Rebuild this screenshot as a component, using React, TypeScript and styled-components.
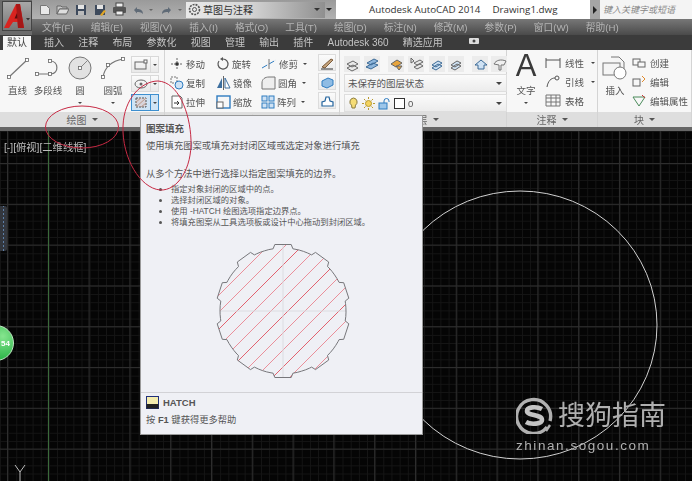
import React from 'react';
import styled, { createGlobalStyle } from 'styled-components';

const GlobalStyle = createGlobalStyle`
  html, body { margin: 0; padding: 0; background: #050505; }
  body { font-family: "Liberation Sans", "Noto Sans CJK SC", sans-serif; }
  #root { width: 692px; height: 481px; overflow: hidden; }
`;

const MENU_ITEMS = ['文件(F)', '编辑(E)', '视图(V)', '插入(I)', '格式(O)', '工具(T)', '绘图(D)', '标注(N)', '修改(M)', '参数(P)', '窗口(W)', '帮助(H)'];
const TAB_ITEMS = ['插入', '注释', '布局', '参数化', '视图', '管理', '输出', '插件', 'Autodesk 360', '精选应用'];
const BULLETS = ['指定对象封闭的区域中的点。', '选择封闭区域的对象。', '使用 -HATCH 绘图选项指定边界点。', '将填充图案从工具选项板或设计中心拖动到封闭区域。'];

const RED = '#c62a44';

/* outline of the notched disc in the tooltip, ten tabs round a circle */
const hatchOutline = (cx: number, cy: number) => {
  const pts: string[] = [];
  for (let i = 0; i < 10; i++) {
    const a = ((90 + i * 36) * Math.PI) / 180;
    const at = (deg: number, r: number) => {
      const t = a + (deg * Math.PI) / 180;
      return `${(cx + r * Math.cos(t)).toFixed(1)} ${(cy - r * Math.sin(t)).toFixed(1)}`;
    };
    pts.push(at(-9, 63), at(-7, 67), at(7, 67), at(9, 63));
    for (let d = 13; d <= 25; d += 4) pts.push(at(d, 63));
  }
  return `M${pts.join('L')}Z`;
};

const Page = styled.div`
  width: 692px;
  height: 481px;
  position: relative;
  overflow: hidden;
  display: flex;
  flex-direction: column;
  filter: blur(0.35px);
`;

const Header = styled.div`
  display: flex;
  height: 35px;
`;

const LogoCell = styled.div`
  width: 32px;
  flex: none;
  background: #6b6b6b;
  padding: 1px 0 4px 2px;
  box-sizing: border-box;
`;

const LogoBox = styled.div`
  width: 30px;
  height: 30px;
  background: linear-gradient(#a8a8a8, #777);
  border: 1px solid #444;
  box-sizing: border-box;
  display: flex;
  align-items: center;
  justify-content: center;
`;

const HeaderRows = styled.div`
  flex: 1;
  display: flex;
  flex-direction: column;
  min-width: 0;
`;

const TopRow = styled.div`
  height: 19px;
  display: flex;
  background: #fff;
`;

const QuickBar = styled.div`
  width: 304px;
  flex: none;
  display: flex;
  align-items: center;
  padding-left: 7px;
  box-sizing: border-box;
  background: linear-gradient(#9a9a9a, #b2b2b2);
`;

const QuickIcon = styled.div<{ $gap: number }>`
  display: flex;
  margin-right: ${p => p.$gap}px;
`;

const Workspace = styled.div`
  width: 139px;
  height: 16px;
  margin-left: 4px;
  display: flex;
  align-items: center;
  gap: 2px;
  padding-left: 2px;
  box-sizing: border-box;
  font-size: 10px;
  color: #333;
  background: linear-gradient(90deg, #e9e9e9, #d6d6d6 45%, #8f8f8f);
`;

const TitleText = styled.div`
  width: 254px;
  flex: none;
  padding-left: 33px;
  box-sizing: border-box;
  display: flex;
  gap: 12px;
  align-items: center;
  font-size: 9.8px;
  font-family: "Open Sans", "Liberation Sans", sans-serif;
  color: #333;
  white-space: nowrap;
`;

const SearchArrow = styled.div`
  width: 10px;
  flex: none;
  background: #a5a5a5;
  display: flex;
  align-items: center;
  justify-content: center;
`;

const SearchBox = styled.div`
  flex: 1;
  font-size: 9px;
  font-style: italic;
  color: #888;
  padding-left: 3px;
  display: flex;
  align-items: center;
  white-space: nowrap;
  overflow: hidden;
  background: #f4f4f4;
`;

const MenuBar = styled.div`
  height: 16px;
  display: flex;
  align-items: center;
  gap: 17px;
  padding-left: 10px;
  font-size: 9.7px;
  color: #b4b4b4;
  white-space: nowrap;
  background: linear-gradient(#777, #4a4a4a);
`;

const TabBar = styled.div`
  height: 15px;
  display: flex;
  align-items: flex-end;
  background: #3b3b3b;
  padding-left: 3px;
  font-size: 10px;
  white-space: nowrap;
  color: #c4c4c4;
`;

const ActiveTab = styled.div`
  width: 28px;
  height: 14px;
  background: #f6f6f6;
  color: #444;
  text-align: center;
  line-height: 14px;
  margin-right: 13px;
`;

const Tab = styled.div<{ $ml?: number }>`
  height: 14px;
  line-height: 14px;
  margin-right: 14.2px;
  margin-left: ${p => p.$ml ?? 0}px;
`;

const Ribbon = styled.div`
  display: flex;
  height: 77px;
  background: #f7f7f7;
  color: #555;
  font-size: 9.5px;
  border-bottom: 4px solid #666;
`;

const Panel = styled.div<{ $w: number }>`
  width: ${p => p.$w}px;
  flex: none;
  display: flex;
  flex-direction: column;
  border-right: 1px solid #d4d4d4;
  box-sizing: border-box;
`;

const PanelBody = styled.div<{ $pad?: string; $gap?: number }>`
  height: 62px;
  display: flex;
  padding: ${p => p.$pad ?? '0'};
  gap: ${p => p.$gap ?? 0}px;
  box-sizing: border-box;
`;

const PanelTitle = styled.div`
  flex: 1;
  display: flex;
  align-items: center;
  justify-content: center;
  gap: 5px;
  background: #dedede;
  color: #666;
  font-size: 10px;
`;

const Caret = styled.span<{ $c?: string; $s?: number }>`
  display: inline-block;
  width: 0;
  height: 0;
  flex: none;
  border-left: ${p => p.$s ?? 3}px solid transparent;
  border-right: ${p => p.$s ?? 3}px solid transparent;
  border-top: ${p => p.$s ?? 3}px solid ${p => p.$c ?? '#444'};
`;

const LargeTool = styled.div<{ $w: number }>`
  width: ${p => p.$w}px;
  flex: none;
  display: flex;
  flex-direction: column;
  align-items: center;
  padding-top: 6px;
  line-height: 12px;
  font-size: 9.5px;
  gap: 5px;
  white-space: nowrap;
`;

const SideColumn = styled.div`
  display: flex;
  flex-direction: column;
  gap: 2px;
  padding-top: 6px;
`;

const SplitButton = styled.div<{ $on?: boolean }>`
  width: 28px;
  height: 17px;
  display: flex;
  box-sizing: border-box;
  background: ${p => (p.$on ? '#cfe4f5' : 'linear-gradient(#fbfbfb, #e9e9e9)')};
  border: 1px solid ${p => (p.$on ? '#3d8fcf' : '#d9d9d9')};
`;

const SplitMain = styled.div<{ $on?: boolean }>`
  width: 18px;
  display: flex;
  align-items: center;
  justify-content: center;
  border-right: 1px solid ${p => (p.$on ? '#3d8fcf' : '#d9d9d9')};
`;

const SplitArrow = styled.div`
  flex: 1;
  display: flex;
  align-items: center;
  justify-content: center;
`;

const ModifyGrid = styled.div`
  display: grid;
  grid-template-columns: 46px 45px 55px;
  grid-auto-rows: 19px;
  padding: 4px 0 0 5px;
`;

const SmallTool = styled.div`
  display: flex;
  align-items: center;
  gap: 2px;
  white-space: nowrap;
  font-size: 9.5px;
`;

const ToolButtons = styled.div`
  display: flex;
  flex-direction: column;
  gap: 2px;
  padding: 4px 0 0 2px;
`;

const SquareButton = styled.div`
  width: 18px;
  height: 17px;
  display: flex;
  align-items: center;
  justify-content: center;
  background: linear-gradient(#fbfbfb, #ececec);
  border: 1px solid #dcdcdc;
  box-sizing: border-box;
`;

const LayerStack = styled.div`
  flex: 1;
  display: flex;
  flex-direction: column;
  gap: 2px;
  padding: 5px 4px 0 4px;
`;

const LayerIcons = styled.div`
  height: 17px;
  display: flex;
  align-items: center;
`;

const LayerIcon = styled.div<{ $ml: number }>`
  display: flex;
  margin-left: ${p => p.$ml}px;
  background: #ececec;
`;

const LayerCombo = styled.div`
  height: 18px;
  display: flex;
  align-items: center;
  gap: 3px;
  padding: 0 4px 0 3px;
  background: linear-gradient(#fbfbfb, #ececec);
  border: 1px solid #dedede;
  box-sizing: border-box;
  font-size: 9.5px;
  color: #555;
`;

const Spacer = styled.div`
  flex: 1;
`;

const SwatchBox = styled.div`
  width: 9px;
  height: 9px;
  border: 1px solid #333;
  background: #fff;
`;

const TextColumn = styled.div`
  display: flex;
  flex-direction: column;
  padding-top: 3px;
`;

const TextRow = styled.div`
  height: 19px;
  display: flex;
  align-items: center;
  gap: 4px;
  white-space: nowrap;
  font-size: 9.5px;
`;

const BigA = styled.div`
  font-family: "Liberation Sans", sans-serif;
  font-size: 31px;
  line-height: 24px;
  height: 24px;
  margin: -2px 0 2px;
  color: #3a3a3a;
`;

const Canvas = styled.div`
  flex: 1;
  position: relative;
  background-color: #050505;
  background-image:
    linear-gradient(#2e2e2e 1px, transparent 1px),
    linear-gradient(90deg, #2e2e2e 1px, transparent 1px),
    linear-gradient(#151515 1px, transparent 1px),
    linear-gradient(90deg, #151515 1px, transparent 1px);
  background-size: 40.8px 40.8px, 40.8px 40.8px, 8.16px 8.16px, 8.16px 8.16px;
  background-position: 0 32px, 7px 0, 0 0, 0 0;
`;

const CanvasDrawing = styled.svg`
  position: absolute;
  inset: 0;
`;

const ViewLabel = styled.div`
  position: absolute;
  left: 4px;
  top: 8px;
  font-size: 10.3px;
  color: #bdbdbd;
  white-space: nowrap;
`;

const SideHandle = styled.div`
  position: absolute;
  left: 0;
  top: 75px;
  width: 7px;
  height: 45px;
  background: radial-gradient(circle, #5d7ea6 0.7px, transparent 1px) 0 22px / 7px 4px repeat-y, #33373e;
  border-radius: 0 2px 2px 0;
`;

const Badge = styled.div`
  position: absolute;
  left: -22px;
  top: 194px;
  width: 36px;
  height: 36px;
  border-radius: 50%;
  box-sizing: border-box;
  border: 1px solid #bfe8c3;
  background: radial-gradient(circle at 70% 30%, #86e58f, #2cb548 70%);
  color: #fff;
  font-size: 8px;
  font-weight: bold;
  display: flex;
  align-items: center;
  justify-content: flex-end;
  padding-right: 3px;
`;

const Watermark = styled.div`
  position: absolute;
  left: 516px;
  top: 266px;
  width: 152px;
  color: #b0b0b0;
`;

const WatermarkTop = styled.div`
  display: flex;
  align-items: center;
  gap: 5px;
`;

const WatermarkName = styled.div`
  font-size: 27px;
  line-height: 36px;
  white-space: nowrap;
`;

const WatermarkUrl = styled.div`
  font-size: 13.5px;
  letter-spacing: 1.55px;
  line-height: 16px;
  margin-top: 4px;
  white-space: nowrap;
`;

const Tooltip = styled.div`
  position: absolute;
  left: 140px;
  top: 115px;
  width: 283px;
  height: 320px;
  box-sizing: border-box;
  background: #eff0f5;
  border: 1px solid #9a9a9a;
  color: #555;
  display: flex;
  flex-direction: column;
  padding: 6px 0 0 5px;
`;

const TipTitle = styled.div`
  font-size: 9.5px;
  font-weight: bold;
  line-height: 13px;
  color: #555;
`;

const TipLine = styled.div<{ $mt: number }>`
  font-size: 9.3px;
  line-height: 13px;
  margin-top: ${p => p.$mt}px;
  white-space: nowrap;
`;

const BulletList = styled.ul`
  list-style: disc;
  margin: 3px 0 0;
  padding: 0 0 0 25px;
  font-size: 8.3px;
  line-height: 11px;
  white-space: nowrap;
`;

const HatchFigure = styled.svg`
  display: block;
  margin: 15px 0 0 69px;
`;

const TipFooter = styled.div`
  margin: 11px 0 0 -5px;
  border-top: 1px solid #d2d2d6;
  padding: 3px 0 0 5px;
  display: flex;
  flex-direction: column;
  gap: 5px;
`;

const CommandRow = styled.div`
  display: flex;
  align-items: center;
  gap: 4px;
  font-size: 9.5px;
  font-weight: bold;
  line-height: 13px;
`;

const HelpLine = styled.div`
  font-size: 9.3px;
  line-height: 13px;
  b { font-weight: bold; }
`;

const Annotations = styled.svg`
  position: absolute;
  inset: 0;
  pointer-events: none;
`;

/* small drawings */
const Ico: React.FC<{ s?: number; h?: number; children: React.ReactNode }> = ({ s = 14, h, children }) => (
  <svg width={s} height={h ?? s} viewBox={`0 0 ${s} ${h ?? s}`} fill="none" style={{ flex: 'none' }}>
    {children}
  </svg>
);

const Node: React.FC<{ x: number; y: number }> = ({ x, y }) => (
  <rect x={x - 1.5} y={y - 1.5} width={3} height={3} fill="#fff" stroke="#666" strokeWidth={0.8} />
);

const AutocadLogo = () => (
  <svg width="28" height="28" viewBox="0 0 28 28">
    <path d="M1 26 L13 2 L17 2 L21 26 L15 26 L14.6 20 L10 20 L6 26 Z" fill="#d9231f" />
    <path d="M13 2 L17 2 L21 26 L15 26 Z" fill="#a51717" />
    <path d="M11.5 16.5 L14 11 L14.4 16.5 Z" fill="#5c0d0d" />
    <path d="M23 16 h4 l-2 2.5 z" fill="#333" />
  </svg>
);

const QUICK: { gap: number; node: React.ReactNode }[] = [
  { gap: 5, node: <Ico s={12}><path d="M1.5 1.5h6l3 3v6h-9z" fill="#e9e9e9" stroke="#777" /></Ico> },
  { gap: 6, node: <Ico s={13}><path d="M1 3h4l1 1h5v2H3.5L1 11z" fill="#c8c8c8" stroke="#666" /><path d="M1 11l2.5-5H13l-2.5 5z" fill="#dedede" stroke="#666" /></Ico> },
  { gap: 7, node: <Ico s={12}><rect x="1" y="1" width="10" height="10" fill="#3e4a5c" /><rect x="3" y="1" width="6" height="4" fill="#e4e4e4" /><rect x="3" y="7" width="6" height="4" fill="#bbb" /></Ico> },
  { gap: 6, node: <Ico s={12}><rect x="1" y="1" width="10" height="10" fill="#3e4a5c" /><rect x="3" y="1" width="6" height="4" fill="#e4e4e4" /><path d="M6 11l4-5 2 1-4 5z" fill="#e0a526" /></Ico> },
  { gap: 5, node: <Ico s={15}><rect x="4" y="1" width="7" height="4" fill="#eee" stroke="#444" /><rect x="1" y="5" width="13" height="6" rx="1" fill="#555" /><rect x="4" y="9" width="7" height="4" fill="#eee" stroke="#444" /></Ico> },
  { gap: 5, node: <Ico s={12}><path d="M2 6 L5 3 V5 C8 5 11 6 11 10 C9 8 7 8 5 8 V9.5 Z" fill="#5f6a76" /></Ico> },
  { gap: 8, node: <Caret $s={2} $c="#666" /> },
  { gap: 5, node: <Ico s={12}><path d="M10 6 L7 3 V5 C4 5 1 6 1 10 C3 8 5 8 7 8 V9.5 Z" fill="#5f6a76" /></Ico> },
  { gap: 0, node: <Caret $s={2} $c="#666" /> },
];

const LineIcon = () => (
  <Ico s={24}><path d="M3 21 L21 4" stroke="#777" strokeWidth={1.2} /><Node x={3} y={21} /><Node x={21} y={4} /></Ico>
);
const PolylineIcon = () => (
  <Ico s={26} h={24}><path d="M2 18 H16 C24 18 24 5 15 5" stroke="#777" strokeWidth={1.2} /><Node x={2} y={18} /><Node x={15} y={18} /><Node x={15} y={5} /></Ico>
);
const CircleIcon = () => (
  <Ico s={24}><circle cx={12} cy={12} r={11} fill="#e2e2e2" stroke="#777" /><path d="M12 12 L20 4" stroke="#888" /><Node x={12} y={12} /></Ico>
);
const ArcIcon = () => (
  <Ico s={26} h={24}><path d="M3 21 C5 10 12 5 23 3" stroke="#777" strokeWidth={1.2} /><Node x={3} y={21} /><Node x={8} y={9} /><Node x={23} y={3} /></Ico>
);

const SMALL: Record<string, React.ReactNode> = {
  移动: <Ico s={14}><path d="M7 1v12M1 7h12" stroke="#666" strokeDasharray="2 1" /><rect x="5.5" y="5.5" width="3" height="3" fill="#333" /></Ico>,
  旋转: <Ico s={14}><path d="M7 2a5 5 0 1 1-4 2" stroke="#555" strokeWidth={1.2} /><path d="M7 0v4L4 2z" fill="#555" /></Ico>,
  修剪: <Ico s={16} h={14}><path d="M1 11L15 3" stroke="#2f7cc0" strokeDasharray="6 2" /><path d="M8 2v10" stroke="#777" /></Ico>,
  复制: <Ico s={14}><rect x="1" y="1" width="6" height="6" fill="none" stroke="#777" strokeDasharray="2 1" /><circle cx="9" cy="9" r="4" fill="#cfe2f4" stroke="#2f7cc0" /></Ico>,
  镜像: <Ico s={15} h={14}><path d="M1 12L6 2v10z" fill="#3d6f9f" /><path d="M14 12L9 2v10z" fill="#fff" stroke="#3d6f9f" /><path d="M7.5 0v14" stroke="#666" /></Ico>,
  圆角: <Ico s={15} h={14}><path d="M1 13V7C1 3 4 1 8 1h6v12z" fill="#eee" stroke="#777" /></Ico>,
  拉伸: <Ico s={14}><path d="M2 1h8l2 2v10H2z" fill="#fff" stroke="#666" /><path d="M4 8h5M7 6l2 2-2 2" stroke="#333" /></Ico>,
  缩放: <Ico s={15} h={14}><rect x="1" y="1" width="13" height="12" fill="none" stroke="#2f7cc0" strokeWidth={1.4} /><rect x="1" y="7" width="6" height="6" fill="#fff" stroke="#666" /></Ico>,
  阵列: <Ico s={14}><g fill="#cfe2f4" stroke="#2f7cc0"><rect x="1" y="1" width="5" height="5" /><rect x="8" y="1" width="5" height="5" /><rect x="1" y="8" width="5" height="5" /><rect x="8" y="8" width="5" height="5" /></g></Ico>,
};

const LAYER_ICONS: { ml: number; node: React.ReactNode }[] = [
  { ml: 0, node: <path d="M3 12l6-3 5 3-6 3zM3 8l6-3 5 3-6 3z" fill="#e8e8e8" stroke="#666" /> },
  { ml: 4, node: <path d="M2 11l7-4 5 2-7 4zM3 7l7-4 4 2-7 4z" fill="#8eb6dc" stroke="#3c6a96" /> },
  { ml: 8, node: <path d="M3 8l6-4 5 3-6 4z M8 10h6l-3 4z" fill="#e7a43c" stroke="#666" /> },
  { ml: 4, node: <path d="M6 7l6-3 3 2-6 3zM6 11l6-3 3 2-6 3zM3 2v5l3-2z" fill="#e8e8e8" stroke="#666" /> },
  { ml: 5, node: <path d="M3 9l6-4 4 2-6 4zM3 12l6-4 4 2-6 4z" fill="#cfe2f4" stroke="#3c6a96" /> },
  { ml: 3, node: <path d="M3 9l6-4 4 2-6 4zM3 12l6-4 4 2-6 4z" fill="#cfe2f4" stroke="#666" /> },
  { ml: 8, node: <path d="M3 9l6-5 6 5h-3v4H6V9z" fill="#cfe2f4" stroke="#3c6a96" /> },
  { ml: 3, node: <path d="M3 8c2-4 7-5 12-3l-2 4h-3v5H8V9z" fill="#f0f0f0" stroke="#777" /> },
];

const GearHatch = () => {
  const d = hatchOutline(68, 68);
  const lines: React.ReactNode[] = [];
  for (let i = 0; i < 15; i++) {
    const sum = 22 + i * 17;
    lines.push(<line key={i} x1={sum} y1={0} x2={0} y2={sum} stroke={i % 3 === 1 ? '#e2626f' : '#ea8f9a'} strokeWidth={1} />);
  }
  return (
    <HatchFigure width="136" height="138" viewBox="0 0 136 138">
      <defs>
        <clipPath id="gear">
          <path d={d} />
        </clipPath>
      </defs>
      <g clipPath="url(#gear)">
        {lines}
        <path d="M0 68H136M68 0V138" stroke="#dcdce1" strokeWidth={1} />
      </g>
      <path d={d} fill="none" stroke="#77777b" strokeWidth={1} />
    </HatchFigure>
  );
};

const App: React.FC = () => (
  <Page>
    <GlobalStyle />
    <Header>
      <LogoCell>
        <LogoBox>
          <AutocadLogo />
        </LogoBox>
      </LogoCell>
      <HeaderRows>
        <TopRow>
          <QuickBar>
            {QUICK.map((q, i) => (
              <QuickIcon key={i} $gap={q.gap}>{q.node}</QuickIcon>
            ))}
            <Workspace>
              <Ico s={13}><circle cx="6.5" cy="6.5" r="5" stroke="#555" strokeWidth={1.6} strokeDasharray="2 1" /><circle cx="6.5" cy="6.5" r="2" stroke="#555" /></Ico>
              草图与注释
              <Spacer />
              <Caret $s={3} $c="#333" />
              &nbsp;
            </Workspace>
            <Spacer />
            <Caret $s={3} $c="#222" />
            &nbsp;
          </QuickBar>
          <TitleText>
            <span>Autodesk AutoCAD 2014</span>
            <span>Drawing1.dwg</span>
          </TitleText>
          <SearchArrow>
            <Ico s={6} h={8}><path d="M1 0l4 4-4 4z" fill="#222" /></Ico>
          </SearchArrow>
          <SearchBox>键入关键字或短语</SearchBox>
        </TopRow>
        <MenuBar>
          {MENU_ITEMS.map(m => (
            <span key={m}>{m}</span>
          ))}
        </MenuBar>
      </HeaderRows>
    </Header>
    <TabBar>
      <ActiveTab>默认</ActiveTab>
      {TAB_ITEMS.map(t => (
        <Tab key={t}>{t}</Tab>
      ))}
      <Tab $ml={10}>
        <Ico s={16} h={10}><rect x="2" y="2" width="10" height="6" rx="1" fill="#ddd" /><circle cx="7" cy="5" r="1.5" fill="#444" /></Ico>
      </Tab>
    </TabBar>
    <Ribbon>
      <Panel $w={165}>
        <PanelBody $pad="0 0 0 4px">
          <LargeTool $w={27}><LineIcon />直线</LargeTool>
          <LargeTool $w={34}><PolylineIcon />多段线</LargeTool>
          <LargeTool $w={30}><CircleIcon />圆<Caret $s={2} /></LargeTool>
          <LargeTool $w={36}><ArcIcon />圆弧<Caret $s={2} /></LargeTool>
          <SideColumn>
            <SplitButton>
              <SplitMain><Ico s={14} h={12}><rect x="1" y="3" width="11" height="7" fill="none" stroke="#666" /><rect x="10" y="1" width="3" height="3" fill="#fff" stroke="#666" /></Ico></SplitMain>
              <SplitArrow><Caret $s={2} /></SplitArrow>
            </SplitButton>
            <SplitButton>
              <SplitMain><Ico s={14} h={12}><ellipse cx="7" cy="6" rx="6" ry="4" fill="none" stroke="#666" /><circle cx="7" cy="6" r="1.5" fill="#666" /></Ico></SplitMain>
              <SplitArrow><Caret $s={2} /></SplitArrow>
            </SplitButton>
            <SplitButton $on>
              <SplitMain $on><Ico s={14} h={13}><rect x="2" y="2" width="10" height="9" fill="#d8d4da" stroke="#555" strokeDasharray="2 1" /><path d="M2 11L12 2M2 6l5-4M7 11l5-4" stroke="#b98" /></Ico></SplitMain>
              <SplitArrow><Caret $s={2} /></SplitArrow>
            </SplitButton>
          </SideColumn>
        </PanelBody>
        <PanelTitle>绘图<Caret $s={3} $c="#555" /></PanelTitle>
      </Panel>
      <Panel $w={175}>
        <PanelBody>
          <ModifyGrid>
            {Object.keys(SMALL).map((k, i) => (
              <SmallTool key={k}>
                {SMALL[k]}
                {k}
                {i % 3 === 2 && <>&nbsp;<Caret $s={2} /></>}
              </SmallTool>
            ))}
          </ModifyGrid>
          <ToolButtons>
            <SquareButton><Ico s={14}><path d="M2 11L11 3l2 1-8 8z" fill="#c4a27a" stroke="#7b5c3d" /><path d="M1 13h12" stroke="#333" /></Ico></SquareButton>
            <SquareButton><Ico s={14}><path d="M2 6l6-3 5 2v5l-6 3-5-2z" fill="#8fbce4" stroke="#2f7cc0" /></Ico></SquareButton>
            <SquareButton><Ico s={14}><path d="M2 12V8l3-1 1-4h3l1 4 3 1v4z" fill="#fff" stroke="#23649e" strokeWidth={1.2} /></Ico></SquareButton>
          </ToolButtons>
        </PanelBody>
        <PanelTitle>修改<Caret $s={3} $c="#555" /></PanelTitle>
      </Panel>
      <Panel $w={167}>
        <PanelBody>
          <LayerStack>
            <LayerIcons>
              {LAYER_ICONS.map((n, i) => (
                <LayerIcon key={i} $ml={n.ml}>
                  <Ico s={16}>{n.node}</Ico>
                </LayerIcon>
              ))}
            </LayerIcons>
            <LayerCombo>未保存的图层状态<Spacer /><Caret $s={3} /></LayerCombo>
            <LayerCombo>
              <Ico s={11} h={13}><path d="M5.5 1a4 4 0 0 1 2 7.2L7 11H4l-.5-2.8A4 4 0 0 1 5.5 1z" fill="#f5dc76" stroke="#8a7a3c" /></Ico>
              <Ico s={13}><circle cx="6.5" cy="6.5" r="3" fill="#f4d35e" stroke="#b99a2e" /><path d="M6.5 0v2M6.5 11v2M0 6.5h2M11 6.5h2M2 2l1.5 1.5M9.5 9.5L11 11M2 11l1.5-1.5M9.5 3.5L11 2" stroke="#b99a2e" /></Ico>
              <Ico s={13}><rect x="1" y="6" width="8" height="6" fill="#9cc6ea" stroke="#2f7cc0" /><path d="M6 6V4a2.5 2.5 0 0 1 5 0v1" stroke="#2f7cc0" /></Ico>
              <SwatchBox />
              0
              <Spacer />
              <Caret $s={3} />
            </LayerCombo>
          </LayerStack>
        </PanelBody>
        <PanelTitle>图层<Caret $s={3} $c="#555" /></PanelTitle>
      </Panel>
      <Panel $w={91}>
        <PanelBody $pad="0 0 0 4px" $gap={4}>
          <LargeTool $w={30}>
            <BigA>A</BigA>
            文字
            <Caret $s={2} />
          </LargeTool>
          <TextColumn>
            <TextRow><Ico s={16} h={12}><path d="M1 1v10M15 1v10M1 3h14" stroke="#555" /></Ico>线性&nbsp;<Caret $s={2} /></TextRow>
            <TextRow><Ico s={16} h={13}><path d="M2 12C3 6 6 3 10 3" stroke="#555" /><circle cx="12" cy="3" r="2" stroke="#555" /></Ico>引线&nbsp;<Caret $s={2} /></TextRow>
            <TextRow><Ico s={16} h={13}><path d="M1 1h14v11H1zM1 4h14M1 8h14M6 1v11M11 1v11" stroke="#777" /></Ico>表格</TextRow>
          </TextColumn>
        </PanelBody>
        <PanelTitle>注释<Caret $s={3} $c="#555" /></PanelTitle>
      </Panel>
      <Panel $w={94}>
        <PanelBody $pad="0 0 0 4px" $gap={4}>
          <LargeTool $w={26}>
            <Ico s={26} h={24}><path d="M9 1h8l5 5v8" stroke="#777" fill="#f5f5f5" /><rect x="1" y="7" width="17" height="12" fill="#f5f5f5" stroke="#777" /><circle cx="18" cy="17" r="6" fill="#fff" stroke="#777" /></Ico>
            插入
          </LargeTool>
          <TextColumn>
            <TextRow><Ico s={14} h={12}><rect x="1" y="2" width="7" height="6" stroke="#666" /><rect x="6" y="5" width="7" height="5" stroke="#666" fill="#f7f7f7" /></Ico>创建</TextRow>
            <TextRow><Ico s={14} h={13}><rect x="1" y="4" width="7" height="7" stroke="#666" /><path d="M10 1l3 3-3 3" stroke="#e08a2c" /></Ico>编辑</TextRow>
            <TextRow><Ico s={14} h={13}><path d="M1 3h12l-6 9z" stroke="#4a8a5a" /><path d="M10 1l3 3" stroke="#c33" /></Ico>编辑属性</TextRow>
          </TextColumn>
        </PanelBody>
        <PanelTitle>块<Caret $s={3} $c="#555" /></PanelTitle>
      </Panel>
    </Ribbon>
    <Canvas>
      <CanvasDrawing width="692" height="351" viewBox="0 0 692 351">
        <path d="M48.5 0V351" stroke="#3a6a3a" strokeWidth={1} />
        <ellipse cx="520" cy="194" rx="137" ry="134" fill="none" stroke="#cfcfcf" strokeWidth={1} />
        <path d="M15 334l5 7 5-7M20 341v10" stroke="#bbb" fill="none" />
      </CanvasDrawing>
      <ViewLabel>[-][俯视][二维线框]</ViewLabel>
      <SideHandle />
      <Badge>54</Badge>
      <Watermark>
        <WatermarkTop>
          <svg width="37" height="37" viewBox="0 0 37 37" style={{ flex: 'none' }}>
            <path d="M31 30A17 17 0 1 1 34 24" fill="none" stroke="#b0b0b0" strokeWidth={3.4} />
            <path d="M26 12C20 9 11 10 11 14C11 19 26 17 26 23C26 27 15 28 10 25" fill="none" stroke="#c4c4c4" strokeWidth={4.6} />
            <path d="M34 28l-4 6" stroke="#b0b0b0" strokeWidth={2.4} />
          </svg>
          <WatermarkName>搜狗指南</WatermarkName>
        </WatermarkTop>
        <WatermarkUrl>zhinan.sogou.com</WatermarkUrl>
      </Watermark>
    </Canvas>
    <Tooltip>
      <TipTitle>图案填充</TipTitle>
      <TipLine $mt={5}>使用填充图案或填充对封闭区域或选定对象进行填充</TipLine>
      <TipLine $mt={15}>从多个方法中进行选择以指定图案填充的边界。</TipLine>
      <BulletList>
        {BULLETS.map(b => (
          <li key={b}>{b}</li>
        ))}
      </BulletList>
      <GearHatch />
      <TipFooter>
        <CommandRow>
          <Ico s={13}><rect x="0.5" y="0.5" width="12" height="12" fill="#f4ecae" stroke="#20307a" /><rect x="0.5" y="8" width="12" height="4.5" fill="#222" /></Ico>
          HATCH
        </CommandRow>
        <HelpLine>按 <b>F1</b> 键获得更多帮助</HelpLine>
      </TipFooter>
    </Tooltip>
    <Annotations width="692" height="481" viewBox="0 0 692 481">
      <ellipse cx="82" cy="127" rx="36.5" ry="21" fill="none" stroke={RED} strokeWidth={1} />
      <path d="M158 81C142 81 124 98 123 126C122 158 140 188 160 190C178 191 192 168 191 140C190 112 178 82 158 81Z" fill="none" stroke={RED} strokeWidth={1} />
    </Annotations>
  </Page>
);

export default App;
